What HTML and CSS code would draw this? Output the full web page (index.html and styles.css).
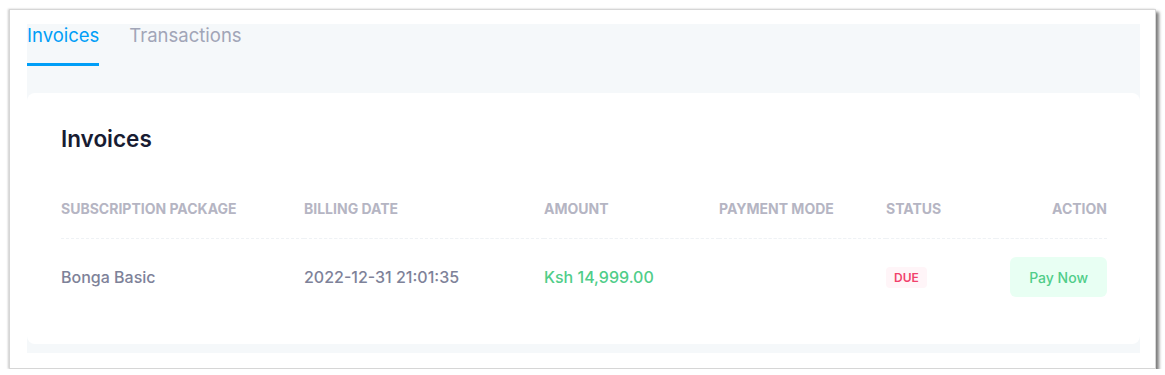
FILE: index.html
```html
<!DOCTYPE html>
<html lang="en">
<head>
  <meta charset="UTF-8">
  <meta name="viewport" content="width=device-width, initial-scale=1.0">
  <title>Billing</title>
  <link rel="stylesheet" href="styles.css">
</head>
<body>
  <div class="frame">
    <div class="panel">
      <div class="tabs">
        <a class="tab active" href="#">Invoices</a>
        <a class="tab" href="#">Transactions</a>
      </div>

      <div class="card">
        <h1>Invoices</h1>
        <table class="invoices">
          <thead>
            <tr>
              <th class="col-package">Subscription Package</th>
              <th class="col-date">Billing Date</th>
              <th class="col-amount">Amount</th>
              <th class="col-mode">Payment Mode</th>
              <th class="col-status">Status</th>
              <th class="col-action">Action</th>
            </tr>
          </thead>
          <tbody>
            <tr>
              <td>Bonga Basic</td>
              <td>2022-12-31 21:01:35</td>
              <td class="amount">Ksh 14,999.00</td>
              <td></td>
              <td><span class="badge-due">DUE</span></td>
              <td class="col-action"><button class="pay-btn">Pay Now</button></td>
            </tr>
          </tbody>
        </table>
      </div>
    </div>
  </div>
</body>
</html>
```

FILE: styles.css
```css
body {
  margin: 0;
  background-color: #fff;
  font-family: Inter, "Noto Sans", Arial, sans-serif;
}

.frame {
  margin: 9px 0 0 9px;
  width: 1147px;
  box-sizing: border-box;
  padding: 17px 15px 15px 17px;
  background-color: #fff;
  border: 1px solid #d6d6d6;
  box-shadow: 3px 3px 3px rgba(0, 0, 0, 0.5), -1px 0 2px rgba(0, 0, 0, 0.2);
}

.panel {
  background-color: #f5f8fa;
  padding-bottom: 9px;
}

.tabs {
  display: flex;
  gap: 30px;
  margin-top: -3px;
}

.tab {
  font-size: 18.5px;
  line-height: 22px;
  padding-bottom: 17px;
  color: #a1a5b7;
  text-decoration: none;
  border-bottom: 3px solid transparent;
}

.tab.active {
  color: #009ef7;
  border-bottom-color: #009ef7;
}

.card {
  margin-top: 27px;
  background-color: #fff;
  border-radius: 8px;
  padding: 32px 33px 28px 34px;
}

.card h1 {
  margin: 0 0 47px;
  font-size: 22.5px;
  line-height: 27px;
  font-weight: 600;
  color: #181c32;
}

.invoices {
  width: 100%;
  border-collapse: collapse;
  table-layout: fixed;
}

.invoices th {
  text-align: left;
  font-size: 14px;
  line-height: 20px;
  font-weight: 700;
  color: #b5b5c3;
  text-transform: uppercase;
  padding: 0 0 19px;
  border-bottom: 1px dashed #eff2f5;
}

.invoices td {
  font-size: 16px;
  line-height: 20px;
  font-weight: 500;
  color: #7e8299;
  padding: 18px 0 19px;
  vertical-align: middle;
}

.col-package { width: 243px; }
.col-date { width: 240px; }
.col-amount { width: 175px; }
.col-mode { width: 167px; }
.col-status { width: 110px; }

.invoices .col-action {
  text-align: right;
}

.invoices .amount {
  color: #50cd89;
}

.badge-due {
  display: inline-block;
  padding: 0 8px;
  height: 21px;
  line-height: 21px;
  font-size: 12px;
  font-weight: 600;
  color: #f1416c;
  background-color: #fff5f8;
  border-radius: 4px;
}

.pay-btn {
  height: 40px;
  padding: 0 19px;
  font-family: inherit;
  font-size: 14px;
  font-weight: 500;
  color: #50cd89;
  background-color: #e8fff3;
  border: none;
  border-radius: 6px;
  cursor: pointer;
}
```
